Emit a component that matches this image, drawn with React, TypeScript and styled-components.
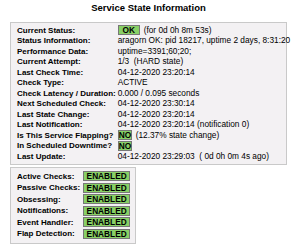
import styled, { createGlobalStyle } from "styled-components";

const GlobalStyle = createGlobalStyle`
  html, body {
    margin: 0;
    padding: 0;
    background: #ffffff;
    font-family: "Liberation Sans", Arial, sans-serif;
    color: #000;
  }
`;

type Row = { label: string; value?: string; badge?: string; extra?: string };

const stateRows: Row[] = [
  { label: "Current Status:", badge: "OK", extra: "(for 0d 0h 8m 53s)" },
  { label: "Status Information:", value: "aragorn OK: pid 18217, uptime 2 days, 8:31:20" },
  { label: "Performance Data:", value: "uptime=3391;60;20;" },
  { label: "Current Attempt:", value: "1/3\u00a0\u00a0(HARD state)" },
  { label: "Last Check Time:", value: "04-12-2020 23:20:14" },
  { label: "Check Type:", value: "ACTIVE" },
  { label: "Check Latency / Duration:", value: "0.000\u00a0/\u00a00.095 seconds" },
  { label: "Next Scheduled Check:", value: "04-12-2020 23:30:14" },
  { label: "Last State Change:", value: "04-12-2020 23:20:14" },
  { label: "Last Notification:", value: "04-12-2020 23:20:14 (notification 0)" },
  { label: "Is This Service Flapping?", badge: "NO", extra: "(12.37% state change)" },
  { label: "In Scheduled Downtime?", badge: "NO" },
  { label: "Last Update:", value: "04-12-2020 23:29:03\u00a0\u00a0( 0d 0h 0m 4s ago)" },
];

const checkRows = [
  "Active Checks:",
  "Passive Checks:",
  "Obsessing:",
  "Notifications:",
  "Event Handler:",
  "Flap Detection:",
];

export default function App() {
  return (
    <>
      <GlobalStyle />
      <Page>
        <Title>Service State Information</Title>
        <Panel>
          <InfoTable>
            <tbody>
              {stateRows.map((r) => (
                <InfoRow key={r.label} $h={10.5}>
                  <Label>{r.label}</Label>
                  <Value>
                    {r.badge ? (
                      <BadgeLine>
                        <Badge $w={r.badge === "OK" ? 22 : 14}>{r.badge}</Badge>
                        {r.extra && <span>{r.extra}</span>}
                      </BadgeLine>
                    ) : (
                      r.value
                    )}
                  </Value>
                </InfoRow>
              ))}
            </tbody>
          </InfoTable>
        </Panel>
        <SmallPanel>
          <InfoTable>
            <tbody>
              {checkRows.map((l) => (
                <InfoRow key={l} $h={11.5}>
                  <CheckLabel>{l}</CheckLabel>
                  <Value>
                    <Badge $w={47}>ENABLED</Badge>
                  </Value>
                </InfoRow>
              ))}
            </tbody>
          </InfoTable>
        </SmallPanel>
      </Page>
    </>
  );
}

const Page = styled.div`
  width: 300px;
  padding: 2px 0 0 10px;
  box-sizing: border-box;
  font-size: 8.3px;
`;

const Title = styled.div`
  width: 277px;
  text-align: center;
  font-weight: bold;
  font-size: 9.5px;
  line-height: 12px;
  margin-bottom: 8px;
`;

const Panel = styled.div`
  width: 277px;
  box-sizing: border-box;
  background: #f3f1f3;
  border: 1px solid #c9c9c9;
  padding: 2px 5px;
`;

const SmallPanel = styled(Panel)`
  width: 126px;
  margin-top: 2px;
  padding: 3px 5px;
`;

const InfoTable = styled.table`
  border-collapse: collapse;
  border-spacing: 0;
`;

const InfoRow = styled.tr<{ $h: number }>`
  height: ${(p) => p.$h}px;
`;

const Label = styled.td`
  font-weight: bold;
  font-size: 8px;
  white-space: nowrap;
  padding: 0 2px 0 1px;
  line-height: 9px;
  vertical-align: middle;
`;

const CheckLabel = styled(Label)`
  padding-right: 3px;
`;

const Value = styled.td`
  white-space: nowrap;
  padding: 0;
  line-height: 9px;
  vertical-align: middle;
`;

const BadgeLine = styled.div`
  display: flex;
  align-items: center;
  gap: 4px;
`;

const Badge = styled.span<{ $w: number }>`
  display: inline-block;
  box-sizing: border-box;
  background: #88d066;
  border: 1px solid #777777;
  font-weight: bold;
  text-align: center;
  width: ${(p) => p.$w}px;
  line-height: 8px;
`;
